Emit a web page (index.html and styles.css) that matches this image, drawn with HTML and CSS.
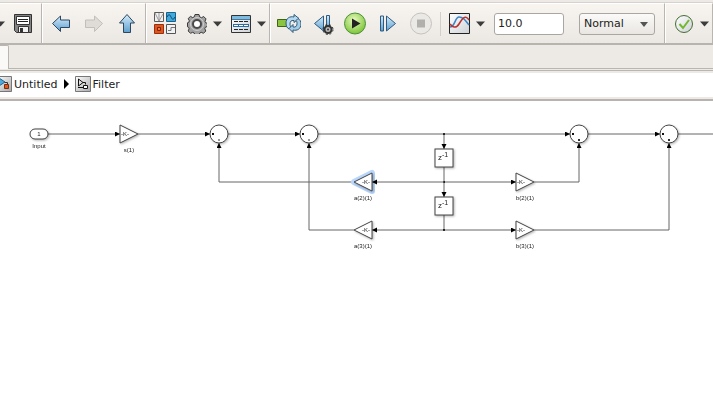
FILE: index.html
```html
<!DOCTYPE html>
<html lang="en">
<head>
    <meta charset="UTF-8">
    <meta name="viewport" content="width=device-width, initial-scale=1.0">
    <title>Untitled/Filter</title>
    <link rel="stylesheet" href="styles.css">
</head>
<body>
    <!-- shared shapes and gradients -->
    <svg class="defs" aria-hidden="true">
        <defs>
            <linearGradient id="blue" x1="0" y1="0" x2="0" y2="1">
                <stop offset="0" stop-color="#d5ecfa"/>
                <stop offset="1" stop-color="#5d9fd0"/>
            </linearGradient>
            <linearGradient id="grey" x1="0" y1="0" x2="1" y2="1">
                <stop offset="0" stop-color="#ffffff"/>
                <stop offset="1" stop-color="#a9a9a9"/>
            </linearGradient>
            <linearGradient id="paper" x1="0" y1="0" x2="1" y2="1">
                <stop offset="0" stop-color="#ffffff"/>
                <stop offset="1" stop-color="#cdd2d6"/>
            </linearGradient>
            <radialGradient id="green" cx="0.45" cy="0.35" r="0.65">
                <stop offset="0" stop-color="#e9fbc0"/>
                <stop offset="1" stop-color="#7cc437"/>
            </radialGradient>
            <symbol id="caret" viewBox="0 0 9 6">
                <path d="M0 0.5h9L4.5 5.5z" fill="#3c3c3c"/>
            </symbol>
            <symbol id="gear" viewBox="0 0 20 20">
                <path d="M8 .5h4l.7 2.400 1.800.8 2.200-1.200 2.300 2.400-1 2.400.6 1.400 1.900.7v3l-2.100.8-.6 1.500 1 2.300-2.300 2.300-2.300-1-1.500.8-.7 2.100H8l-.8-2.200-1.500-.7-2.200 1-2.300-2.300.9-2.300-.5-1.400-1.100-.5V8.800l1.300-.5.5-1.500-1.100-2.300L3.500 2.400l2.200 1.200 1.600-.8z" fill="#a2a2a2" stroke="#3a3a3a"/>
                <circle cx="10" cy="10" r="6.500" fill="none" stroke="#cfcfcf"/>
                <circle cx="10" cy="10" r="4" fill="#fff" stroke="#4a4a4a" stroke-width="2"/>
            </symbol>
        </defs>
    </svg>

    <header class="toolbar">
        <div class="group file">
            <button class="caret" aria-label="New model options"><svg width="9" height="6"><use href="#caret"/></svg></button>
            <button class="tool" aria-label="Save">
                <svg width="24" height="24" viewBox="0 0 24 24">
                    <path d="M3.5 2.500h17v18h-15l-2-2z" fill="#858585" stroke="#333"/>
                    <path d="M5.5 4.500h13v8h-13z" fill="#fff" stroke="#333"/>
                    <path d="M7 7.500h10M7 9.500h10" stroke="#222"/>
                    <path d="M7.5 14.500h10v6h-10z" fill="#f2f2f2" stroke="#333"/>
                    <path d="M9 16h3v4H9z" fill="#333"/>
                </svg>
            </button>
        </div>

        <div class="group nav">
            <button class="tool" aria-label="Back">
                <svg width="24" height="24" viewBox="0 0 24 24"><path d="M3.5 11.500l8-7.500v4h9v7.500h-9v4z" fill="url(#blue)" stroke="#2c475f"/></svg>
            </button>
            <button class="tool" aria-label="Forward" disabled>
                <svg width="24" height="24" viewBox="0 0 24 24"><path d="M20.500 11.500l-8-7.500v4h-9v7.500h9v4z" fill="#dfdcd8" stroke="#c2bfba"/></svg>
            </button>
            <button class="tool" aria-label="Up to parent">
                <svg width="24" height="24" viewBox="0 0 24 24"><path d="M12 2.500l7.500 8.500h-4v9.500h-7V11h-4z" fill="url(#blue)" stroke="#2c475f"/></svg>
            </button>
        </div>

        <div class="group model">
            <button class="tool" aria-label="Library browser">
                <svg width="24" height="24" viewBox="0 0 24 24">
                    <path d="M.5.5h9v9h-9z" fill="#f0f0f0" stroke="#5c5c5c"/>
                    <path d="M1 1l4 8M5 1v8M9 2l-4 7" fill="none" stroke="#999"/>
                    <path d="M12.500.5h9v9h-9z" fill="#42a9dd" stroke="#16618c"/>
                    <path d="M13 5c2-4 3-2 4 0s2 4 4 0" fill="none" stroke="#0b4468"/>
                    <path d="M.5 12.500h9v9h-9z" fill="#e2561e" stroke="#97300c"/>
                    <path d="M3.500 15.500h3v3h-3z" fill="#ef7b45" stroke="#7b2508"/>
                    <path d="M12.500 12.500h9v9h-9z" fill="#f0f2f3" stroke="#555"/>
                    <path d="M14 18.500h3v-3h4" fill="none" stroke="#777"/>
                </svg>
            </button>
            <div class="split">
                <button class="tool" aria-label="Model configuration"><svg width="20" height="20"><use href="#gear"/></svg></button>
                <button class="caret" aria-label="Configuration options"><svg width="9" height="6"><use href="#caret"/></svg></button>
            </div>
            <div class="split">
                <button class="tool" aria-label="Model explorer">
                    <svg width="24" height="24" viewBox="0 0 24 24">
                        <path d="M2.500 3.500h19v17h-19z" fill="url(#paper)" stroke="#333"/>
                        <path d="M3 4h18v3H3z" fill="#7dbbe0"/>
                        <path d="M3 7.500h18" stroke="#4b7899"/>
                        <path d="M5 9.500h4m1 0h4m1 0h4M5 17.500h4m1 0h4m1 0h4" stroke="#222"/>
                        <path d="M4 12h16v3H4z" fill="#2b6ea5"/>
                        <path d="M5 13.500h4m1 0h4m1 0h4" stroke="#fff"/>
                    </svg>
                </button>
                <button class="caret" aria-label="Explorer options"><svg width="9" height="6"><use href="#caret"/></svg></button>
            </div>
        </div>

        <div class="group simulation">
            <div class="run">
                <button class="tool" aria-label="Fast restart">
                    <svg width="24" height="24" viewBox="0 0 24 24">
                        <path d="M.5 7.500h10v7H.5z" fill="#8bc53f" stroke="#3f6418"/>
                        <path d="M9 11c0-5 4-7 8-6V2.500l5 4-5 4V8.500c-3-.5-4 1-4 3.500 0 1 0 2 1 3l-2 2c-2-1-3-3-3-6z" fill="#b5d9f0" stroke="#315878"/>
                        <path d="M24 12c0 5-4 7-8 6v2.500l-4-4 4-4v2.500c3 .5 4-1 4-3.500 0-1 0-2-1-3l2-2c2 1 3 3 3 5.500z" fill="#a4cdea" stroke="#315878"/>
                    </svg>
                </button>
                <button class="tool" aria-label="Step back">
                    <svg width="24" height="24" viewBox="0 0 24 24">
                        <path d="M4.500 11.500L13.500 4v15z" fill="url(#blue)" stroke="#2f5b80"/>
                        <path d="M16.500 3.500h3v14h-3z" fill="url(#blue)" stroke="#2f5b80"/>
                        <circle cx="18" cy="17.500" r="3.500" fill="#bbb" stroke="#333" stroke-width="2"/>
                        <circle cx="18" cy="17.500" r="5" fill="none" stroke="#333" stroke-dasharray="2 2"/>
                        <circle cx="18" cy="17.500" r="1" fill="#333"/>
                    </svg>
                </button>
                <button class="tool" aria-label="Run">
                    <svg width="24" height="24" viewBox="0 0 24 24">
                        <circle cx="12" cy="11.500" r="10.500" fill="url(#green)" stroke="#4b9139"/>
                        <path d="M9 6.500v10l8.500-5z" fill="#222"/>
                    </svg>
                </button>
                <button class="tool" aria-label="Step forward">
                    <svg width="24" height="24" viewBox="0 0 24 24">
                        <path d="M4.500 4v15h3V4z" fill="url(#blue)" stroke="#2f5b80"/>
                        <path d="M10.500 4v15l9-7.500z" fill="url(#blue)" stroke="#2f5b80"/>
                    </svg>
                </button>
                <button class="tool" aria-label="Stop" disabled>
                    <svg width="24" height="24" viewBox="0 0 24 24">
                        <circle cx="12" cy="11.500" r="10.500" fill="#ebe9e6" stroke="#c6c3bf"/>
                        <path d="M8 7.500h8v8H8z" fill="#b2b0ad"/>
                    </svg>
                </button>
            </div>
            <span class="divider"></span>
            <div class="split">
                <button class="tool" aria-label="Simulation data inspector">
                    <svg width="24" height="24" viewBox="0 0 24 24">
                        <path d="M1.500 1.500h20v20h-20z" fill="url(#paper)" stroke="#222"/>
                        <path d="M2 15c5 0 5-10 9-10s6 3 10 8" fill="none" stroke="#3a84c6" stroke-width="1.500"/>
                        <path d="M2 12c2 3 6 5 9 0s6-10 10-4" fill="none" stroke="#b8322f" stroke-width="1.500"/>
                    </svg>
                </button>
                <button class="caret" aria-label="Inspector options"><svg width="9" height="6"><use href="#caret"/></svg></button>
            </div>
            <div class="settings">
                <input class="stop-time" type="text" value="10.0" aria-label="Stop time">
                <div class="mode">
                    <select aria-label="Simulation mode">
                        <option>Normal</option>
                        <option>Accelerator</option>
                    </select>
                    <svg width="8" height="5"><path d="M0 0h8L4 5z" fill="#555"/></svg>
                </div>
            </div>
        </div>

        <div class="group check">
            <div class="split">
                <button class="tool" aria-label="Model advisor">
                    <svg width="24" height="24" viewBox="0 0 24 24">
                        <circle cx="12" cy="12" r="8.500" fill="url(#paper)" stroke="#446d32"/>
                        <path d="M7.500 12l3.500 4 6-8" fill="none" stroke="#74b72c" stroke-width="2"/>
                    </svg>
                </button>
                <button class="caret" aria-label="Advisor options"><svg width="9" height="6"><use href="#caret"/></svg></button>
            </div>
        </div>
    </header>

    <div class="tabs"><div class="tab"></div></div>

    <nav class="breadcrumb" aria-label="Model hierarchy">
        <a href="#">
            <svg width="16" height="16" viewBox="0 0 16 16">
                <path d="M.5.5h15v15H.5z" fill="url(#grey)" stroke="#777"/>
                <path d="M3 2l6 4-6 4z" fill="#4eaadd" stroke="#235f86"/>
                <path d="M9 6.500h2.500v2" fill="none" stroke="#333"/>
                <path d="M8.500 8.500h4v4h-4z" fill="#e2581e" stroke="#7c2b0d"/>
            </svg>
            Untitled
        </a>
        <svg class="arrow" width="5" height="10"><path d="M0 0v10l5-5z" fill="#000"/></svg>
        <a href="#">
            <svg width="16" height="16" viewBox="0 0 16 16">
                <path d="M.5.5h15v15H.5z" fill="url(#grey)" stroke="#777"/>
                <path d="M3.500 3v7L8 6.500zM8 6.500h2.500v2M3 11.500h5" fill="none" stroke="#111"/>
                <path d="M8.500 9.500h4v3h-4z" fill="#fff" stroke="#111"/>
            </svg>
            Filter
        </a>
    </nav>

    <main class="canvas">
        <svg class="diagram" role="img" aria-label="Filter block diagram">
            <defs>
                <marker id="arrow" markerUnits="userSpaceOnUse" markerWidth="6" markerHeight="6" refX="5" refY="2.500" orient="auto">
                    <path d="M0 0v5l5-2.500z" fill="#000"/>
                </marker>
                <symbol id="sum" viewBox="0 0 20 20">
                    <circle cx="10" cy="10" r="9"/>
                    <path d="M3 9h2v2H3z" fill="#111" stroke="none"/>
                </symbol>
            </defs>

            <!-- signals -->
            <g class="signal">
                <path d="M48 33H120"/>
                <path d="M138 33H210"/>
                <path d="M228 33H300"/>
                <path d="M318 33H570"/>
                <path d="M588 33H660"/>
                <path d="M444 33V48"/>
                <path d="M444 66V96"/>
                <path d="M444 129H372"/>
                <path d="M444 81H516"/>
                <path d="M444 129H516"/>
                <path d="M354 81H219V42"/>
                <path d="M354 129H309V42"/>
                <path d="M534 81H579V42"/>
                <path d="M534 129H669V42"/>
            </g>
            <g class="wire">
                <path d="M444 114V129"/>
                <line x1="678" y1="33" x2="100%" y2="33"/>
            </g>
            <g class="joint">
                <circle cx="444" cy="33" r="1"/>
                <circle cx="444" cy="81" r="1"/>
                <circle cx="444" cy="129" r="1"/>
            </g>

            <!-- selected gain -->
            <path class="selection" d="M354 81l18-9v18z"/>
            <g class="signal">
                <path d="M444 81H372"/>
            </g>

            <!-- blocks -->
            <g class="block">
                <rect x="30" y="28" width="18" height="10" rx="5"/>
                <path d="M120 24v18l18-9z"/>
                <path d="M372 72v18l-18-9z"/>
                <path d="M372 120v18l-18-9z"/>
                <path d="M516 72v18l18-9z"/>
                <path d="M516 120v18l18-9z"/>
                <rect x="435" y="48" width="18" height="18"/>
                <rect x="435" y="96" width="18" height="18"/>
                <use href="#sum" x="209" y="23" width="20" height="20"/>
                <use href="#sum" x="299" y="23" width="20" height="20"/>
                <use href="#sum" x="569" y="23" width="20" height="20"/>
                <use href="#sum" x="659" y="23" width="20" height="20"/>
            </g>
            <g class="sign">
                <path d="M218 39h2M308 39h2"/>
                <path class="plus" d="M578 39h2M668 39h2"/>
            </g>

            <!-- block contents -->
            <g class="value">
                <text x="39" y="35">1</text>
                <text x="125" y="35">-K-</text>
                <text x="366" y="83">-K-</text>
                <text x="366" y="131">-K-</text>
                <text x="521" y="83">-K-</text>
                <text x="521" y="131">-K-</text>
            </g>
            <g class="delay">
                <text x="438" y="59">z<tspan class="power" dy="-3">-1</tspan></text>
                <text x="438" y="107">z<tspan class="power" dy="-3">-1</tspan></text>
            </g>
            <g class="name">
                <text x="39" y="47">Input</text>
                <text x="129" y="51">s(1)</text>
                <text x="363" y="99">a(2)(1)</text>
                <text x="363" y="147">a(3)(1)</text>
                <text x="525" y="99">b(2)(1)</text>
                <text x="525" y="147">b(3)(1)</text>
            </g>
        </svg>
    </main>
</body>
</html>
```
FILE: styles.css
```css
* {
    box-sizing: border-box;
}
body {
    margin: 0;
    min-height: 100vh;
    display: flex;
    flex-direction: column;
    overflow-x: hidden;
    background-color: #edeae6;
    color: #222;
    font-family: "DejaVu Sans", sans-serif;
    font-size: 11px;
}
svg {
    display: block;
    flex: none;
}
.defs {
    position: absolute;
    width: 0;
    height: 0;
}

/* toolbar */
.toolbar {
    display: flex;
    height: 43px;
    margin-top: 2px;
    border-top: 1px solid #d6d2ce;
    border-bottom: 2px solid #b7b3ae;
    background: linear-gradient(#f8f5f1, #ebe7e2);
}
.group {
    display: flex;
    flex: none;
    align-items: center;
    border-left: 1px solid #fff;
    border-right: 1px solid #b9b5b1;
    border-top: 1px solid #fff;
}
.file {
    gap: 6px;
    margin-left: -5px;
    padding-right: 6px;
}
.nav {
    gap: 9px;
    padding: 0 6px;
}
.model {
    gap: 7px;
    padding: 0 3px 0 7px;
}
.simulation {
    gap: 7px;
    padding: 0 9px 0 6px;
}
.check {
    flex: 1 0 auto;
    padding: 0 2px 0 6px;
}
.run {
    display: flex;
    gap: 9px;
}
.split {
    display: flex;
    align-items: center;
    gap: 4px;
}
.settings {
    display: flex;
    gap: 15px;
    padding-left: 2px;
}
button {
    display: flex;
    align-items: center;
    justify-content: center;
    padding: 0;
    border: none;
    background: none;
}
.tool {
    width: 24px;
    height: 24px;
}
.caret {
    width: 9px;
    height: 24px;
}
.divider {
    width: 1px;
    height: 24px;
    background-color: #d2cfcb;
}
.stop-time,
.mode select {
    height: 22px;
    border: 1px solid #aaa7a3;
    border-radius: 3px;
    color: #222;
    font: inherit;
}
.stop-time {
    width: 70px;
    padding: 0 3px;
    background-color: #fff;
}
.mode {
    position: relative;
}
.mode select {
    width: 76px;
    padding: 0 4px;
    appearance: none;
    background: linear-gradient(#fbfaf8, #e9e6e2);
}
.mode svg {
    position: absolute;
    right: 7px;
    top: 9px;
    pointer-events: none;
}

/* tab strip */
.tabs {
    display: flex;
    height: 24px;
    border-bottom: 1px solid #b9b5b1;
}
.tab {
    width: 9px;
    height: 24px;
    border-top: 1px solid #b9b5b1;
    border-right: 1px solid #b9b5b1;
    border-top-right-radius: 2px;
    background-color: #faf9f8;
}

/* breadcrumb */
.breadcrumb {
    display: flex;
    align-items: center;
    gap: 6px;
    height: 29px;
    margin-top: 1px;
    border-top: 1px solid #b9b5b1;
    border-bottom: 2px solid #edeae6;
    background-color: #fff;
    box-shadow: inset 0 2px #edeae6;
}
.breadcrumb a {
    display: flex;
    align-items: center;
    gap: 2px;
    color: inherit;
    text-decoration: none;
}
.breadcrumb a:first-child {
    margin-left: -4px;
}

/* model canvas */
.canvas {
    flex: 1;
    border-top: 2px solid #b8b3b0;
    background-color: #fff;
}
.diagram {
    width: 100%;
    height: 200px;
    font-family: "Liberation Sans", Arial, sans-serif;
}
.signal path,
.wire path,
.wire line {
    fill: none;
    stroke: #666;
    stroke-width: 1;
}
.signal path {
    marker-end: url(#arrow);
}
.block {
    fill: #fff;
    stroke: #444;
    filter: drop-shadow(1px 1px 1px rgba(0, 0, 0, 0.3));
}
.selection {
    fill: #b9d6fb;
    stroke: #b9d6fb;
    stroke-width: 6;
    stroke-linejoin: round;
}
.sign {
    stroke: #333;
    stroke-width: 1;
}
.plus {
    stroke-width: 2;
}
.value,
.name {
    fill: #222;
    font-size: 6px;
    text-anchor: middle;
}
.delay {
    fill: #222;
    font-size: 8px;
}
.power {
    font-size: 7px;
}
```
